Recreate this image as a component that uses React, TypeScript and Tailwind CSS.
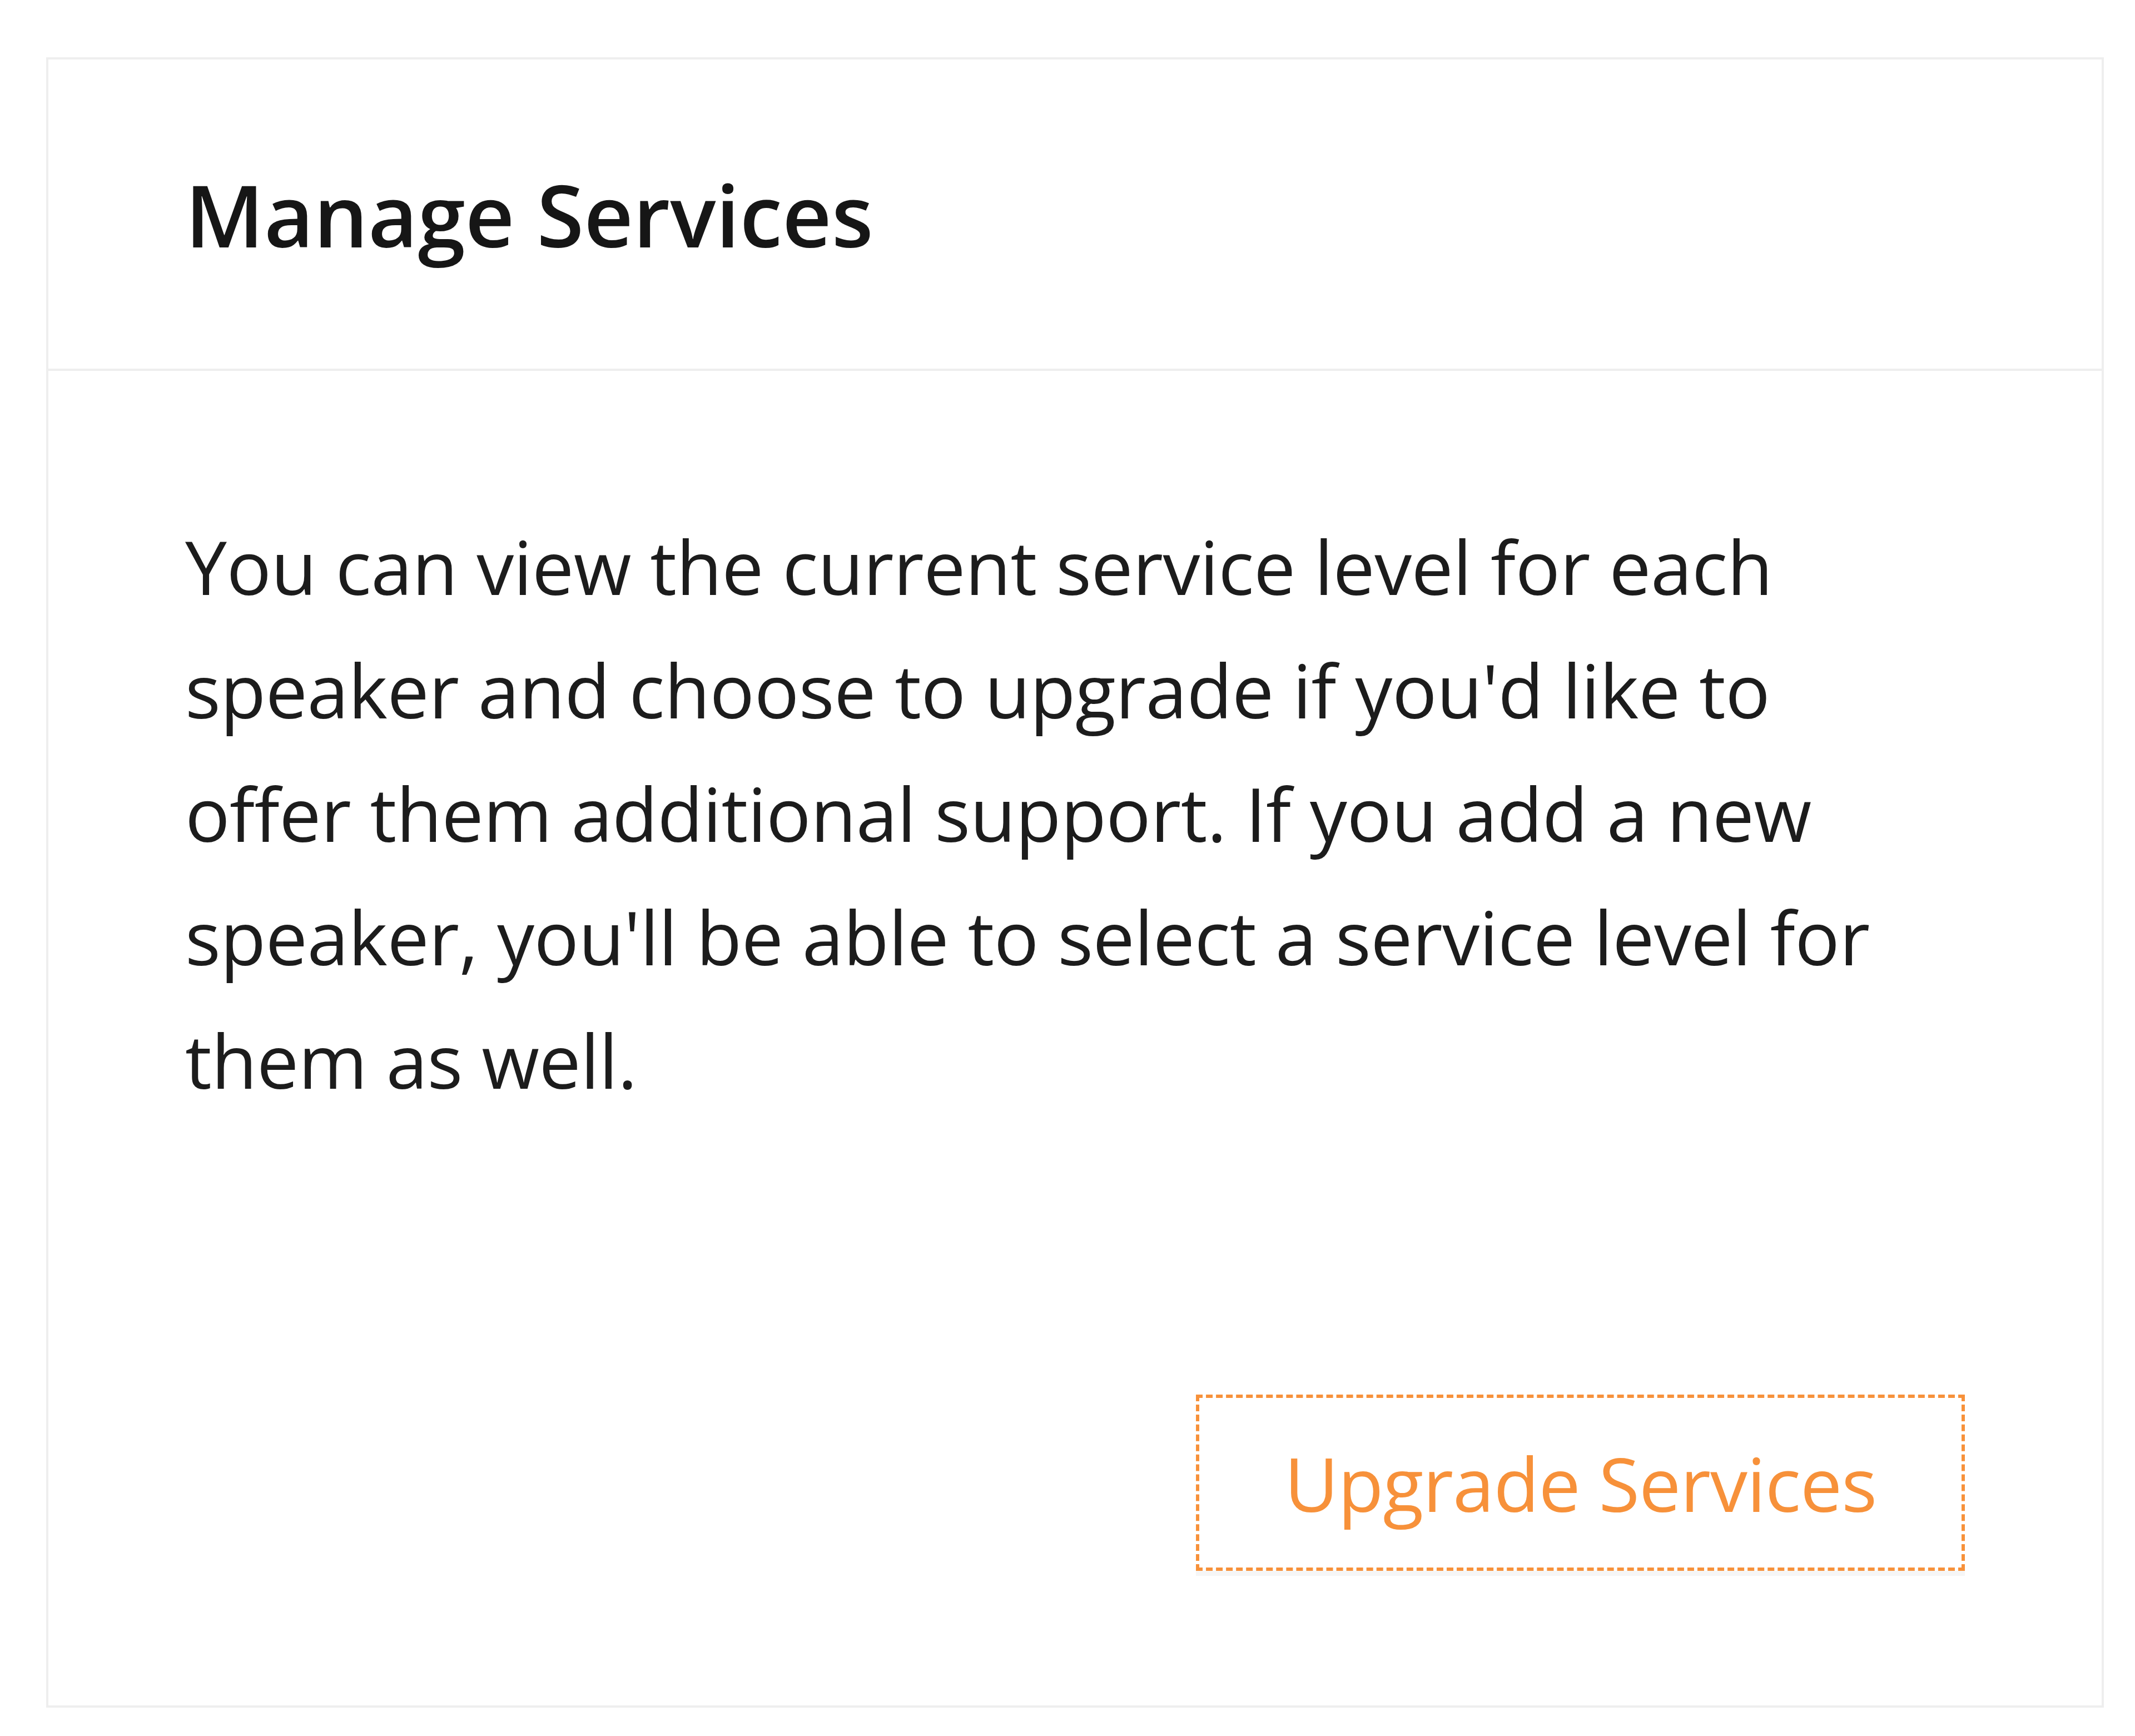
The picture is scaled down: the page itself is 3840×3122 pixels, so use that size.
import React from 'react';

const body =
    "You can view the current service level for each speaker and choose to upgrade if you'd like to offer them additional support. If you add a new speaker, you'll be able to select a service level for them as well.";

export default function App() {
    return (
        <div className="min-h-[3122px] w-[3840px] bg-white pt-[103px] pl-[83px] font-['Open_Sans','Noto_Sans',sans-serif]">
            <div className="w-[3701px] h-[2968px] border-[4px] border-[#eeeeee] bg-white flex flex-col">
                {/* header */}
                <div className="h-[560px] flex items-center px-[246px] border-b-[4px] border-[#eeeeee]">
                    <h2 className="text-[154px] leading-none font-semibold text-[#161616]">Manage Services</h2>
                </div>

                {/* body */}
                <div className="flex-1 flex flex-col px-[246px] pt-[240px] pb-[242px]">
                    <p className="text-[134px] leading-[222px] text-[#1c1c1c] tracking-[-0.5px] max-w-[3110px]">{body}</p>

                    <div className="mt-auto flex justify-end">
                        <button
                            type="button"
                            className="w-[1383px] h-[317px] flex items-center justify-center border-[6px] border-dashed border-[#f7913a] bg-white text-[#f7913a] text-[134px] leading-none tracking-[-1px] shadow-[0_9px_0_#f6f6f6]"
                        >
                            Upgrade Services
                        </button>
                    </div>
                </div>
            </div>
        </div>
    );
}
